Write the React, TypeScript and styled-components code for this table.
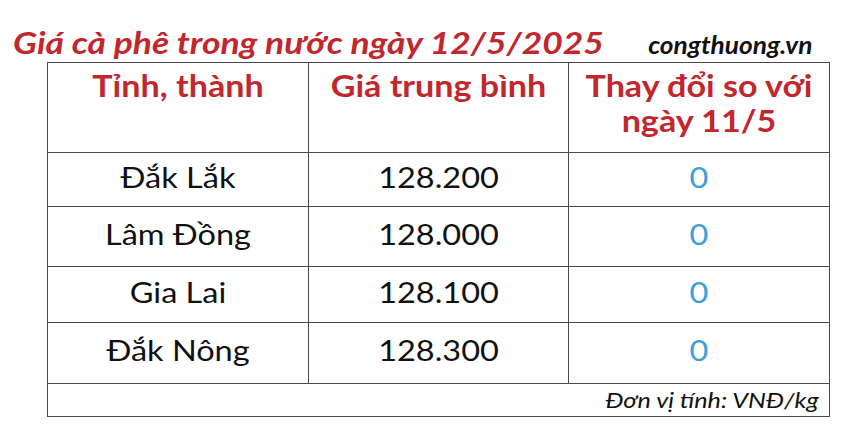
import styled, { createGlobalStyle } from "styled-components"

const GlobalStyle = createGlobalStyle`
  html, body {
    margin: 0;
    padding: 0;
    background: #ffffff;
  }
  body {
    font-family: "Lato", "Open Sans", sans-serif;
  }
`;

const Page = styled.div`
  width: 853px;
  height: 432px;
  overflow: hidden;
  background: #ffffff;
`;

const TitleBar = styled.div`
  display: flex;
  align-items: flex-end;
  justify-content: space-between;
  height: 62px;
  padding: 0 41px 5px 13px;
  box-sizing: border-box;
`;

const Title = styled.h1`
  margin: 0;
  font-size: 30px;
  font-weight: 700;
  font-style: italic;
  color: #c1272d;
  line-height: 1;
  white-space: nowrap;
  transform: scaleX(1.18);
  transform-origin: left center;
`;

const Brand = styled.span`
  font-size: 25px;
  font-weight: 700;
  font-style: italic;
  color: #111111;
  line-height: 1;
  white-space: nowrap;
  transform: scaleX(1.05);
  transform-origin: right center;
`;

const PriceTable = styled.table`
  margin-left: 47px;
  width: 782px;
  border-collapse: collapse;
  table-layout: fixed;
`;

const HeadCell = styled.th`
  box-sizing: border-box;
  border: 1.5px solid #4a4a4a;
  height: 90px;
  padding: 0;
  vertical-align: top;
`;

const HeadText = styled.div`
  padding-top: 5px;
  text-align: center;
  font-size: 31px;
  font-weight: 700;
  line-height: 35px;
  color: #c1272d;
  transform: scaleX(1.1);
  transform-origin: center;
`;

const Cell = styled.td<{ $h: number }>`
  box-sizing: border-box;
  border: 1.5px solid #4a4a4a;
  height: ${(p) => p.$h}px;
  padding: 0 0 6px;
  text-align: center;
  vertical-align: middle;
`;

const CellText = styled.div<{ $zero?: boolean }>`
  font-size: 29px;
  font-weight: 400;
  line-height: 1.1;
  color: ${(p) => (p.$zero ? "#3a9fda" : "#111111")};
  transform: scaleX(1.12);
  transform-origin: center;
`;

const NoteCell = styled.td`
  box-sizing: border-box;
  border: 1.5px solid #4a4a4a;
  height: 33px;
  padding: 0 10px 0 0;
  text-align: right;
  vertical-align: middle;
`;

const NoteText = styled.span`
  display: inline-block;
  font-size: 21px;
  font-style: italic;
  line-height: 1;
  color: #111111;
  transform: scaleX(1.2);
  transform-origin: right center;
`;

const rows = [
  { name: "Đắk Lắk", price: "128.200", change: "0", h: 54 },
  { name: "Lâm Đồng", price: "128.000", change: "0", h: 60 },
  { name: "Gia Lai", price: "128.100", change: "0", h: 56 },
  { name: "Đắk Nông", price: "128.300", change: "0", h: 61 },
]

const App = () => {
  return (
    <Page>
      <GlobalStyle />
      <TitleBar>
        <Title>Giá cà phê trong nước ngày 12/5/2025</Title>
        <Brand>congthuong.vn</Brand>
      </TitleBar>
      <PriceTable>
        <colgroup>
          <col style={{ width: "261px" }} />
          <col style={{ width: "260px" }} />
          <col style={{ width: "261px" }} />
        </colgroup>
        <thead>
          <tr>
            <HeadCell><HeadText>Tỉnh, thành</HeadText></HeadCell>
            <HeadCell><HeadText>Giá trung bình</HeadText></HeadCell>
            <HeadCell><HeadText>Thay đổi so với ngày 11/5</HeadText></HeadCell>
          </tr>
        </thead>
        <tbody>
          {rows.map((r) => (
            <tr key={r.name}>
              <Cell $h={r.h}><CellText>{r.name}</CellText></Cell>
              <Cell $h={r.h}><CellText>{r.price}</CellText></Cell>
              <Cell $h={r.h}><CellText $zero>{r.change}</CellText></Cell>
            </tr>
          ))}
          <tr>
            <NoteCell colSpan={3}><NoteText>Đơn vị tính: VNĐ/kg</NoteText></NoteCell>
          </tr>
        </tbody>
      </PriceTable>
    </Page>
  )
}

export default App
